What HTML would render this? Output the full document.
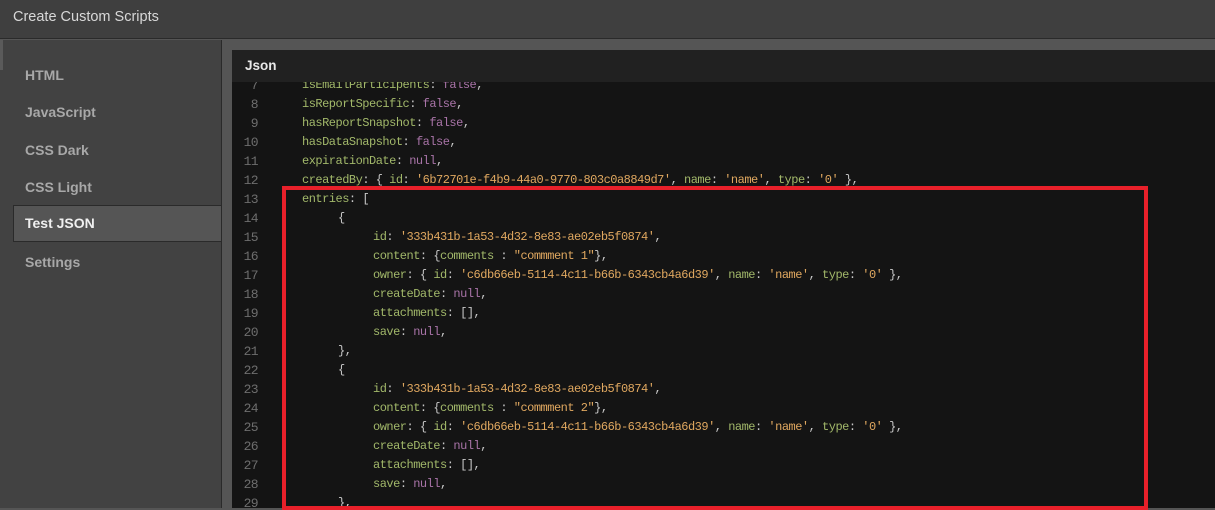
<!DOCTYPE html>
<html><head><meta charset="utf-8"><style>
*{margin:0;padding:0;box-sizing:border-box}
body{width:1215px;height:508px;overflow:hidden;background:#555;font-family:"Liberation Sans",sans-serif;position:relative}
#title{position:absolute;left:0;top:0;width:1215px;height:39px;background:#3f3f3f;border-bottom:1px solid #2a2a2a;color:#d8d8d8;font-size:14.5px;line-height:34px;padding-left:13px}
#side{position:absolute;left:0;top:40px;width:222px;height:468px;background:#424242;border-right:1px solid #2a2a2a}
#strip{position:absolute;left:0;top:40px;width:3px;height:30px;background:#5a5a5a}
.it{position:absolute;left:25px;color:#a8a8a8;font-weight:bold;font-size:14px}
#sel{position:absolute;left:13px;top:165px;width:208px;height:37px;background:#555;border:1px solid #2a2a2a;border-right:none}
#sel span{position:absolute;left:11px;top:9px;color:#f0f0f0;font-weight:bold;font-size:14px}
#hdr{position:absolute;left:232px;top:50px;width:983px;height:32px;background:#212121;color:#e8e8e8;font-size:13.5px;font-weight:bold;line-height:32px;padding-left:13px}
#code{position:absolute;left:232px;top:82px;width:983px;height:426px;background:#141414;overflow:hidden}
.ln{position:absolute;left:0;width:26px;text-align:right;color:#6e6e6e;font-family:"Liberation Mono",monospace;font-size:13px;letter-spacing:-0.6px;line-height:19px}
.tx{position:absolute;white-space:pre;font-family:"Liberation Mono",monospace;font-size:12px;letter-spacing:-0.5px;line-height:19px;color:#c8c8c8}
.k{color:#a2b86a}.s{color:#e0a860}.n{color:#a974a8}
#box{position:absolute;left:282px;top:186px;width:866px;height:324px;border:4px solid #e8202a}
</style></head><body>
<div id="title">Create Custom Scripts</div>
<div id="side">
<div class="it" style="top:27px">HTML</div>
<div class="it" style="top:64px">JavaScript</div>
<div class="it" style="top:102px">CSS Dark</div>
<div class="it" style="top:139px">CSS Light</div>
<div id="sel"><span>Test JSON</span></div>
<div class="it" style="top:214px">Settings</div>
</div>
<div id="strip"></div>
<div id="hdr">Json</div>
<div id="code">
<div class="ln" style="top:-6px">7<br>8<br>9<br>10<br>11<br>12<br>13<br>14<br>15<br>16<br>17<br>18<br>19<br>20<br>21<br>22<br>23<br>24<br>25<br>26<br>27<br>28<br>29</div>
<div class="tx" style="left:70px;top:-6px"><span class="k">isEmailParticipents</span>: <span class="n">false</span>,
<span class="k">isReportSpecific</span>: <span class="n">false</span>,
<span class="k">hasReportSnapshot</span>: <span class="n">false</span>,
<span class="k">hasDataSnapshot</span>: <span class="n">false</span>,
<span class="k">expirationDate</span>: <span class="n">null</span>,
<span class="k">createdBy</span>: { <span class="k">id</span>: <span class="s">'6b72701e-f4b9-44a0-9770-803c0a8849d7'</span>, <span class="k">name</span>: <span class="s">'name'</span>, <span class="k">type</span>: <span class="s">'0'</span> },
<span class="k">entries</span>: [</div>
<div class="tx" style="left:106px;top:127px">{</div>
<div class="tx" style="left:141px;top:146px"><span class="k">id</span>: <span class="s">'333b431b-1a53-4d32-8e83-ae02eb5f0874'</span>,
<span class="k">content</span>: {<span class="k">comments</span> : <span class="s">"commment 1"</span>},
<span class="k">owner</span>: { <span class="k">id</span>: <span class="s">'c6db66eb-5114-4c11-b66b-6343cb4a6d39'</span>, <span class="k">name</span>: <span class="s">'name'</span>, <span class="k">type</span>: <span class="s">'0'</span> },
<span class="k">createDate</span>: <span class="n">null</span>,
<span class="k">attachments</span>: [],
<span class="k">save</span>: <span class="n">null</span>,</div>
<div class="tx" style="left:106px;top:260px">},
{</div>
<div class="tx" style="left:141px;top:298px"><span class="k">id</span>: <span class="s">'333b431b-1a53-4d32-8e83-ae02eb5f0874'</span>,
<span class="k">content</span>: {<span class="k">comments</span> : <span class="s">"commment 2"</span>},
<span class="k">owner</span>: { <span class="k">id</span>: <span class="s">'c6db66eb-5114-4c11-b66b-6343cb4a6d39'</span>, <span class="k">name</span>: <span class="s">'name'</span>, <span class="k">type</span>: <span class="s">'0'</span> },
<span class="k">createDate</span>: <span class="n">null</span>,
<span class="k">attachments</span>: [],
<span class="k">save</span>: <span class="n">null</span>,</div>
<div class="tx" style="left:106px;top:412px">},</div>
</div>
<div id="box"></div>
</body></html>
